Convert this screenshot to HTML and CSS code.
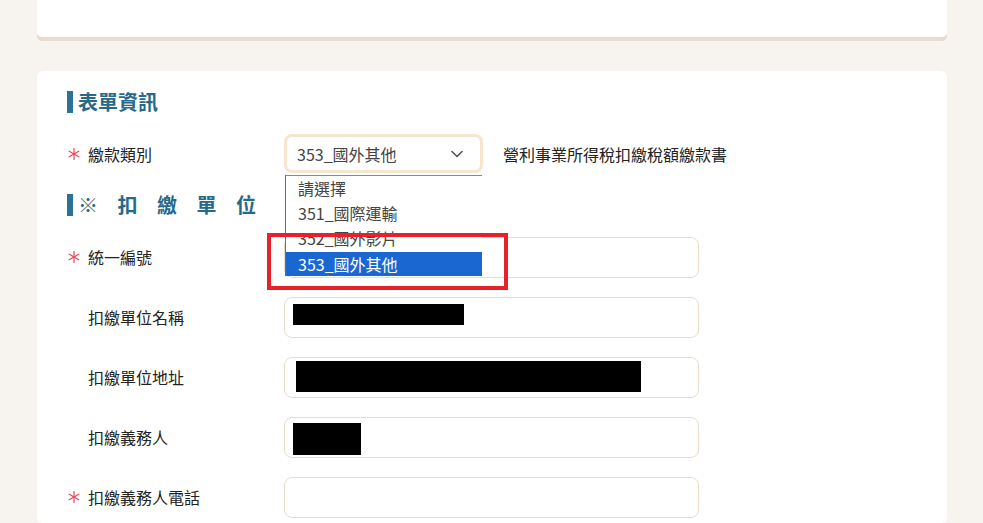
FILE: index.html
```html
<!DOCTYPE html>
<html lang="zh-Hant">
<head>
<meta charset="utf-8">
<link rel="stylesheet" href="styles.css">
</head>
<body>
<div class="card top-card"></div>
<div class="card form-card">
  <div class="heading"><span class="bar"></span><span class="heading-text">表單資訊</span></div>
  <div class="row row-select">
    <div class="label"><span class="req"><svg viewBox="0 0 12 12" width="12" height="12"><g stroke="#e8485c" stroke-width="1.2" stroke-linecap="round"><line x1="6" y1="0.5" x2="6" y2="11.5"/><line x1="1.2" y1="3.2" x2="10.8" y2="8.8"/><line x1="1.2" y1="8.8" x2="10.8" y2="3.2"/></g></svg></span>繳款類別</div>
    <div class="select-wrap">
      <div class="select">
        <span>353_國外其他</span>
        <svg class="chev" viewBox="0 0 12 8" width="12" height="8"><path d="M1 1.5 L6 6.5 L11 1.5" fill="none" stroke="#555" stroke-width="1.6" stroke-linecap="round" stroke-linejoin="round"/></svg>
      </div>
      <div class="dropdown">
        <div class="opt">請選擇</div>
        <div class="opt">351_國際運輸</div>
        <div class="opt">352_國外影片</div>
        <div class="opt selected">353_國外其他</div>
      </div>
      <div class="annot"></div>
    </div>
    <div class="desc">營利事業所得稅扣繳稅額繳款書</div>
  </div>
  <div class="heading heading2"><span class="bar"></span><span class="heading-text spaced">※扣繳單位</span></div>
  <div class="row">
    <div class="label"><span class="req"><svg viewBox="0 0 12 12" width="12" height="12"><g stroke="#e8485c" stroke-width="1.2" stroke-linecap="round"><line x1="6" y1="0.5" x2="6" y2="11.5"/><line x1="1.2" y1="3.2" x2="10.8" y2="8.8"/><line x1="1.2" y1="8.8" x2="10.8" y2="3.2"/></g></svg></span>統一編號</div>
    <div class="input"></div>
  </div>
  <div class="row">
    <div class="label"><span class="req"></span>扣繳單位名稱</div>
    <div class="input"><div class="redact r-name"></div></div>
  </div>
  <div class="row">
    <div class="label"><span class="req"></span>扣繳單位地址</div>
    <div class="input"><div class="redact r-addr"></div></div>
  </div>
  <div class="row">
    <div class="label"><span class="req"></span>扣繳義務人</div>
    <div class="input"><div class="redact r-person"></div></div>
  </div>
  <div class="row">
    <div class="label"><span class="req"><svg viewBox="0 0 12 12" width="12" height="12"><g stroke="#e8485c" stroke-width="1.2" stroke-linecap="round"><line x1="6" y1="0.5" x2="6" y2="11.5"/><line x1="1.2" y1="3.2" x2="10.8" y2="8.8"/><line x1="1.2" y1="8.8" x2="10.8" y2="3.2"/></g></svg></span>扣繳義務人電話</div>
    <div class="input"></div>
  </div>
</div>
</body>
</html>
```

FILE: styles.css
```css
html, body {
  margin: 0;
  padding: 0;
}
body {
  background: #f7f3ee;
  font-family: "Noto Sans CJK TC", "Noto Sans", sans-serif;
  color: #222;
  overflow: hidden;
  height: 523px;
}
.card {
  background: #fff;
  margin: 0 36px 0 37px;
  border-radius: 6px;
}
.top-card {
  height: 37px;
  border-radius: 0 0 5px 5px;
  box-shadow: 0 4px 0 #e8dccd;
}
.form-card {
  margin-top: 34px;
  padding: 20px 30px 0 30px;
  height: 452px;
  box-sizing: border-box;
}
.heading {
  display: flex;
  align-items: center;
  height: 22px;
  margin-bottom: 21px;
}
.heading .bar {
  width: 6px;
  height: 22px;
  background: #2a7395;
  margin-right: 5px;
}
.heading-text {
  font-size: 20px;
  font-weight: 700;
  color: #27698a;
  line-height: 22px;
}
.heading-text.spaced {
  letter-spacing: 19.5px;
}
.heading2 {
  margin-top: 21px;
}
.row {
  display: flex;
  align-items: center;
  height: 40px;
  margin-bottom: 20px;
}
.row-select {
  height: 39px;
  margin-bottom: 0;
  position: relative;
  z-index: 2;
}
.label {
  width: 217px;
  display: flex;
  align-items: center;
  font-size: 16px;
  line-height: 20px;
  color: #222;
}
.req {
  width: 21px;
  height: 12px;
  display: inline-flex;
  padding-left: 1px;
  box-sizing: border-box;
}
.select-wrap {
  position: relative;
  width: 199px;
  height: 39px;
}
.select {
  box-sizing: border-box;
  width: 199px;
  height: 39px;
  border: 3px solid #f5e6cf;
  border-radius: 8px;
  background: #fff;
  display: flex;
  align-items: center;
  justify-content: space-between;
  padding: 0 17px 0 10px;
  font-size: 16px;
  color: #444;
}
.chev {
  display: block;
}
.dropdown {
  position: absolute;
  left: 1px;
  top: 41px;
  width: 197px;
  background: #fff;
  border-top: 1px solid #8a8a8a;
  border-left: 1px solid #6d6d6d;
  box-sizing: border-box;
}
.opt {
  height: 25px;
  line-height: 25px;
  padding-left: 12px;
  font-size: 16px;
  color: #444;
  white-space: nowrap;
}
.opt.selected {
  background: #1b67d2;
  color: #fff;
  margin-top: 1px;
  height: 24px;
}
.annot {
  position: absolute;
  left: -17px;
  top: 99px;
  width: 241px;
  height: 57px;
  border: 4px solid #e8202a;
  box-sizing: border-box;
}
.desc {
  margin-left: 20px;
  font-size: 16px;
  color: #222;
}
.input {
  box-sizing: border-box;
  width: 415px;
  height: 41px;
  border: 1px solid #e9dccb;
  border-radius: 8px;
  background: #fff;
  display: flex;
  align-items: flex-start;
}
.redact {
  background: #000;
}
.r-name {
  width: 171px;
  height: 21px;
  margin: 6px 0 0 8px;
}
.r-addr {
  width: 345px;
  height: 31px;
  margin: 3px 0 0 11px;
}
.r-person {
  width: 68px;
  height: 32px;
  margin: 5px 0 0 8px;
}
```
